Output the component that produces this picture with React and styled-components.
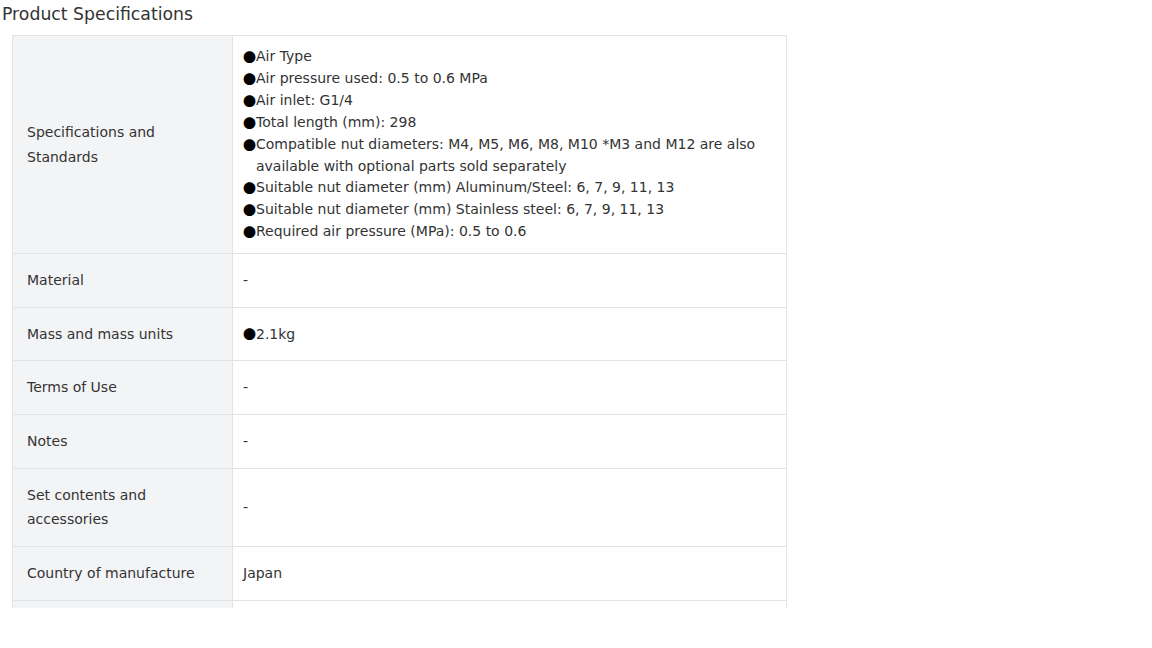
import React from "react";
import styled, { createGlobalStyle } from "styled-components";

const Global = createGlobalStyle`
  html, body { margin: 0; padding: 0; background: #fff; }
  body { font-family: "DejaVu Sans", Verdana, sans-serif; color: #333; }
`;

const Viewport = styled.div`
  height: 608px;
  overflow: hidden;
  padding-left: 2px;
`;

const Title = styled.h2`
  margin: 0;
  padding-top: 3px;
  font-size: 17.3px;
  font-weight: normal;
  line-height: 22px;
  color: #333;
  height: 32px;
`;

const Table = styled.table`
  margin-left: 10px;
  width: 775px;
  border-collapse: collapse;
  font-size: 14px;
  color: #333;
`;

const Row = styled.tr``;

const Label = styled.th`
  width: 192px;
  background: #f3f4f6;
  border: 1px solid #e3e3e3;
  padding: 14px 13px 14px 14px;
  text-align: left;
  font-weight: normal;
  line-height: 24.65px;
  vertical-align: middle;
`;

const Value = styled.td`
  border: 1px solid #e3e3e3;
  padding: ${(p) => (p.$list ? "10px 10px" : "14px 10px")};
  line-height: ${(p) => (p.$list ? "21.9px" : "24.65px")};
  vertical-align: middle;
  background: #fff;
`;

const Item = styled.div`
  display: flex;
`;

const Bullet = styled.span`
  flex: none;
  width: 13px;
  font-family: "Noto Sans CJK JP", sans-serif;
  font-size: 13px;
  color: #000;
`;

const rows = [
  {
    label: "Specifications and Standards",
    list: [
      "Air Type",
      "Air pressure used: 0.5 to 0.6 MPa",
      "Air inlet: G1/4",
      "Total length (mm): 298",
      "Compatible nut diameters: M4, M5, M6, M8, M10 *M3 and M12 are also available with optional parts sold separately",
      "Suitable nut diameter (mm) Aluminum/Steel: 6, 7, 9, 11, 13",
      "Suitable nut diameter (mm) Stainless steel: 6, 7, 9, 11, 13",
      "Required air pressure (MPa): 0.5 to 0.6",
    ],
  },
  { label: "Material", text: "-" },
  { label: "Mass and mass units", list: ["2.1kg"] },
  { label: "Terms of Use", text: "-" },
  { label: "Notes", text: "-" },
  { label: "Set contents and accessories", text: "-" },
  { label: "Country of manufacture", text: "Japan" },
  { label: "", text: "" },
];

export default function App() {
  return (
    <>
      <Global />
      <Viewport>
        <Title>Product Specifications</Title>
        <Table>
          <tbody>
            {rows.map((r, i) => (
              <Row key={i}>
                <Label>{r.label || "\u00a0"}</Label>
                {r.list ? (
                  <Value $list={r.list.length > 1}>
                    {r.list.map((t) => (
                      <Item key={t}>
                        <Bullet>●</Bullet>
                        <span>{t}</span>
                      </Item>
                    ))}
                  </Value>
                ) : (
                  <Value>{r.text || "\u00a0"}</Value>
                )}
              </Row>
            ))}
          </tbody>
        </Table>
      </Viewport>
    </>
  );
}
